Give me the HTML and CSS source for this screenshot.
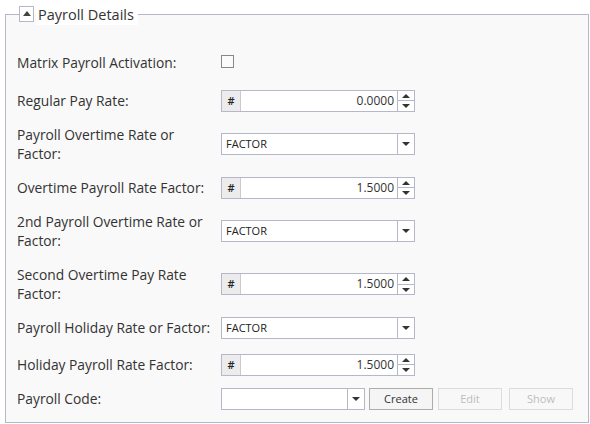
FILE: index.html
```html
<!DOCTYPE html>
<html lang="en">
<head>
  <meta charset="UTF-8" />
  <meta name="viewport" content="width=device-width, initial-scale=1.0"/>
  <title>Payroll Details</title>
  <link rel="stylesheet" href="styles.css">
</head>
<body>

  <fieldset class="panel">
    <legend class="panel-legend">
      <span class="toggle">
        <svg width="8" height="5" viewBox="0 0 8 5"><path d="M0 5 L4 0 L8 5 Z" fill="#444"/></svg>
      </span>
      <span class="panel-title">Payroll Details</span>
    </legend>

    <div class="row first">
      <label class="row-label">Matrix Payroll Activation:</label>
      <span class="checkbox"></span>
    </div>

    <div class="row">
      <label class="row-label">Regular Pay Rate:</label>
      <div class="num">
        <span class="num-addon">#</span>
        <span class="num-value">0.0000</span>
        <span class="spin"><span class="spin-up"></span><span class="spin-down"></span></span>
      </div>
    </div>

    <div class="row">
      <label class="row-label">Payroll Overtime Rate or<br>Factor:</label>
      <div class="combo">
        <span class="combo-value">FACTOR</span>
        <span class="combo-arrow"></span>
      </div>
    </div>

    <div class="row">
      <label class="row-label">Overtime Payroll Rate Factor:</label>
      <div class="num">
        <span class="num-addon">#</span>
        <span class="num-value">1.5000</span>
        <span class="spin"><span class="spin-up"></span><span class="spin-down"></span></span>
      </div>
    </div>

    <div class="row">
      <label class="row-label">2nd Payroll Overtime Rate or<br>Factor:</label>
      <div class="combo">
        <span class="combo-value">FACTOR</span>
        <span class="combo-arrow"></span>
      </div>
    </div>

    <div class="row">
      <label class="row-label">Second Overtime Pay Rate<br>Factor:</label>
      <div class="num">
        <span class="num-addon">#</span>
        <span class="num-value">1.5000</span>
        <span class="spin"><span class="spin-up"></span><span class="spin-down"></span></span>
      </div>
    </div>

    <div class="row wide-gap">
      <label class="row-label">Payroll Holiday Rate or Factor:</label>
      <div class="combo">
        <span class="combo-value">FACTOR</span>
        <span class="combo-arrow"></span>
      </div>
    </div>

    <div class="row">
      <label class="row-label">Holiday Payroll Rate Factor:</label>
      <div class="num">
        <span class="num-addon">#</span>
        <span class="num-value">1.5000</span>
        <span class="spin"><span class="spin-up"></span><span class="spin-down"></span></span>
      </div>
    </div>

    <div class="row">
      <label class="row-label">Payroll Code:</label>
      <div class="combo short">
        <span class="combo-value"></span>
        <span class="combo-arrow"></span>
      </div>
      <button class="btn">Create</button>
      <button class="btn" disabled>Edit</button>
      <button class="btn btn-wide" disabled>Show</button>
    </div>
  </fieldset>

</body>
</html>
```

FILE: styles.css
```css
body {
  margin: 0;
  background: #fff;
  font-family: "Open Sans", "Noto Sans", sans-serif;
  color: #333;
}
.panel {
  margin: 5px 1px 0 5px;
  padding: 23px 10px 6px 11px;
  border: 1px solid #b5b8c8;
  background: #f9f9f9;
  height: 418px;
  box-sizing: border-box;
}
.panel-legend {
  display: flex;
  align-items: center;
  height: 18px;
  padding: 0;
  margin-left: 2px;
}
.toggle {
  width: 15px;
  height: 16px;
  border: 1px solid #b5b8c8;
  background: #fff;
  display: flex;
  align-items: flex-start;
  justify-content: center;
  box-sizing: border-box;
  padding-top: 4px;
  margin-right: 2px;
}
.toggle svg {
  display: block;
}
.panel-title {
  background: #fff;
  font-size: 14.5px;
  line-height: 20px;
  padding: 0 4px 0 2px;
  color: #333;
  margin-top: 2px;
}
.row {
  display: flex;
  align-items: center;
  padding: 5px 0 6px;
}
.row.first {
  margin-bottom: 4px;
}
.row.wide-gap {
  margin-bottom: 3px;
}
.row-label {
  width: 204px;
  flex: none;
  font-size: 13.8px;
  line-height: 19px;
  padding: 2px 0;
  white-space: nowrap;
}
.checkbox {
  width: 13px;
  height: 13px;
  border: 1px solid #888;
  background: #fbfbfb;
  box-sizing: border-box;
  margin-top: -3px;
}
.num, .combo {
  display: flex;
  width: 194px;
  height: 22px;
  border: 1px solid #b5b8c8;
  background: #fff;
  box-sizing: border-box;
  font-size: 12px;
}
.num-addon {
  width: 18px;
  background: #ececec;
  border-right: 1px solid #c9cbd4;
  text-align: center;
  line-height: 20px;
  font-size: 11px;
  font-weight: 600;
  color: #222;
}
.num-value {
  flex: 1;
  text-align: right;
  line-height: 20px;
  padding-right: 3px;
  color: #333;
}
.spin {
  width: 16px;
  border-left: 1px solid #b5b8c8;
  display: flex;
  flex-direction: column;
}
.spin-up, .spin-down {
  flex: 1;
  position: relative;
}
.spin-up {
  border-bottom: 1px solid #b5b8c8;
}
.spin-up::after, .spin-down::after, .combo-arrow::after {
  content: "";
  position: absolute;
  left: 4px;
  border-left: 4px solid transparent;
  border-right: 4px solid transparent;
}
.spin-up::after {
  top: 3px;
  border-bottom: 4px solid #333;
}
.spin-down::after {
  top: 3px;
  border-top: 4px solid #333;
}
.combo-value {
  flex: 1;
  padding-left: 4px;
  line-height: 20px;
  font-size: 11px;
  color: #222;
}
.combo-arrow {
  width: 16px;
  border-left: 1px solid #b5b8c8;
  position: relative;
}
.combo-arrow::after {
  top: 8px;
  border-top: 4px solid #333;
}
.combo.short {
  width: 144px;
}
.btn {
  width: 64px;
  height: 22px;
  margin-left: 4px;
  border: 1px solid #adadad;
  background: #f5f5f5;
  font-family: "Open Sans", "Noto Sans", sans-serif;
  font-size: 11px;
  color: #333;
  padding: 0;
}
.btn + .btn {
  margin-left: 5px;
}
.btn-wide {
  margin-left: 7px !important;
}
.btn:disabled {
  border-color: #dcdcdc;
  color: #bdbdbd;
  background: #f8f8f8;
}
```
